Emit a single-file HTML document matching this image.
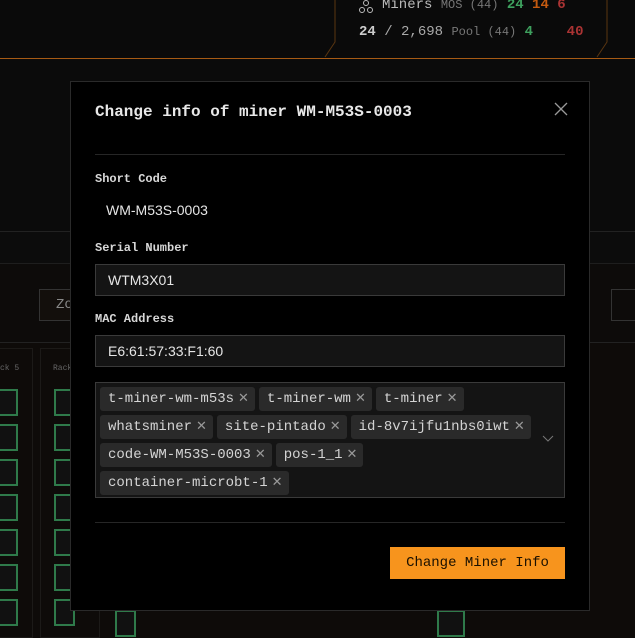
<!DOCTYPE html>
<html><head><style>
*{box-sizing:border-box;margin:0;padding:0}
body{width:635px;height:629px;overflow:hidden;background:#0e0b09;font-family:"Liberation Mono",monospace;position:relative}
.a{position:absolute}
.in{position:absolute;left:95px;width:470px;height:32px;background:#141414;border:1px solid #3a3a3a;color:#e6e6e6;font-family:"Liberation Sans",sans-serif;font-size:14px;line-height:30px;padding-left:12px}
.lbl{position:absolute;left:95px;font-size:12px;font-weight:bold;color:#d8d8d8}
.tag{display:inline-block;background:#2a2a2a;border-radius:3px;color:#d4d4d4;font-size:14px;height:24px;line-height:24px;padding:0 6px 0 8px;margin:0 4px 4px 0}
.tag i{font-style:normal;color:#999;margin-left:4px;font-size:13px}
.box{position:absolute;width:21px;height:27px;border:2px solid #2f7a4a;background:#111}
</style></head><body>
<div class="a" style="left:0;top:0;width:635px;height:58px;background:#0a0a0a"></div>
<div class="a" style="left:0;top:58px;width:635px;height:1px;background:#a65a14"></div>
<div class="a" style="left:0;top:59px;width:635px;height:172px;background:#0b0b0b"></div>
<div class="a" style="left:0;top:231px;width:635px;height:1px;background:#222"></div>
<div class="a" style="left:0;top:232px;width:635px;height:31px;background:#0c0c0c"></div>
<div class="a" style="left:0;top:263px;width:635px;height:80px;background:#0d0b0a;border-top:1px solid #1e1e1e;border-bottom:1px solid #222"></div>
<div class="a" style="left:39px;top:289px;width:40px;height:32px;border:1px solid #333;background:#130f0c;color:#888;font-size:14px;line-height:30px;padding-left:16px">Zo</div>
<div class="a" style="left:611px;top:289px;width:30px;height:32px;border:1px solid #333"></div>
<svg class="a" style="left:320px;top:0" width="300" height="58"><path d="M15 0 V42 L5 57 M287 0 V42 L277 57" stroke="#5a3510" fill="none"/></svg>
<svg class="a" style="left:358px;top:0" width="16" height="14"><circle cx="8" cy="3" r="2.5" stroke="#bbb" fill="none"/><circle cx="4" cy="10" r="2.5" stroke="#bbb" fill="none"/><circle cx="12" cy="10" r="2.5" stroke="#bbb" fill="none"/></svg>
<div class="a" style="left:382px;top:-3px;font-size:14px;color:#bbb">Miners <span style="color:#777;font-size:12px">MOS (44)</span> <span style="color:#3ea05e;font-weight:bold">24</span> <span style="color:#c45a10;font-weight:bold">14</span> <span style="color:#a33;font-weight:bold">6</span></div>
<div class="a" style="left:359px;top:24px;font-size:14px;color:#aaa"><b style="color:#ccc">24</b> / 2,698 <span style="color:#777;font-size:12px">Pool (44)</span> <span style="color:#3ea05e;font-weight:bold">4</span> &nbsp;&nbsp;&nbsp;<span style="color:#a33;font-weight:bold">40</span></div>
<div class="a" style="left:-5px;top:348px;width:38px;height:290px;border:1px solid #1c1a18"></div>
<div class="a" style="left:40px;top:348px;width:60px;height:290px;border:1px solid #1c1a18"></div>
<div class="a" style="left:0;top:364px;font-size:8px;color:#666">ck 5</div>
<div class="a" style="left:53px;top:364px;font-size:8px;color:#666">Rack</div>
<div class="box" style="left:-3px;top:389px"></div><div class="box" style="left:54px;top:389px"></div>
<div class="box" style="left:-3px;top:424px"></div><div class="box" style="left:54px;top:424px"></div>
<div class="box" style="left:-3px;top:459px"></div><div class="box" style="left:54px;top:459px"></div>
<div class="box" style="left:-3px;top:494px"></div><div class="box" style="left:54px;top:494px"></div>
<div class="box" style="left:-3px;top:529px"></div><div class="box" style="left:54px;top:529px"></div>
<div class="box" style="left:-3px;top:564px"></div><div class="box" style="left:54px;top:564px"></div>
<div class="box" style="left:-3px;top:599px"></div><div class="box" style="left:54px;top:599px"></div>
<div class="box" style="left:115px;top:610px"></div><div class="box" style="left:437px;top:610px;width:28px"></div>
<div class="a" style="left:70px;top:81px;width:520px;height:530px;background:#000;border:1px solid #2a2a2a"></div>
<div class="a" style="left:95px;top:103px;font-size:16px;font-weight:bold;color:#e8e8e8">Change info of miner WM-M53S-0003</div>
<svg class="a" style="left:554px;top:102px" width="14" height="14"><path d="M1 1 L13 13 M13 1 L1 13" stroke="#999" stroke-width="1.3"/></svg>
<div class="a" style="left:95px;top:154px;width:470px;height:1px;background:#262626"></div>
<div class="lbl" style="top:172px">Short Code</div>
<div class="a" style="left:106px;top:202px;font-family:'Liberation Sans',sans-serif;font-size:14px;color:#e6e6e6">WM-M53S-0003</div>
<div class="lbl" style="top:241px">Serial Number</div>
<div class="in" style="top:264px">WTM3X01</div>
<div class="lbl" style="top:312px">MAC Address</div>
<div class="in" style="top:335px">E6:61:57:33:F1:60</div>
<div class="a" style="left:95px;top:382px;width:470px;height:116px;background:#141414;border:1px solid #3a3a3a;padding:4px 0 0 4px">
<div style="width:440px"><span class="tag">t-miner-wm-m53s<i>✕</i></span><span class="tag">t-miner-wm<i>✕</i></span><span class="tag">t-miner<i>✕</i></span><span class="tag">whatsminer<i>✕</i></span><span class="tag">site-pintado<i>✕</i></span><span class="tag">id-8v7ijfu1nbs0iwt<i>✕</i></span><span class="tag">code-WM-M53S-0003<i>✕</i></span><span class="tag">pos-1_1<i>✕</i></span><span class="tag">container-microbt-1<i>✕</i></span></div>
<svg class="a" style="left:446px;top:52px" width="12" height="8"><path d="M1 1 L6 6 L11 1" stroke="#777" fill="none"/></svg>
</div>
<div class="a" style="left:95px;top:522px;width:470px;height:1px;background:#262626"></div>
<div class="a" style="left:390px;top:547px;width:175px;height:32px;background:#f7941d;color:#1a1000;font-size:14px;line-height:32px;text-align:center">Change Miner Info</div>
</body></html>
